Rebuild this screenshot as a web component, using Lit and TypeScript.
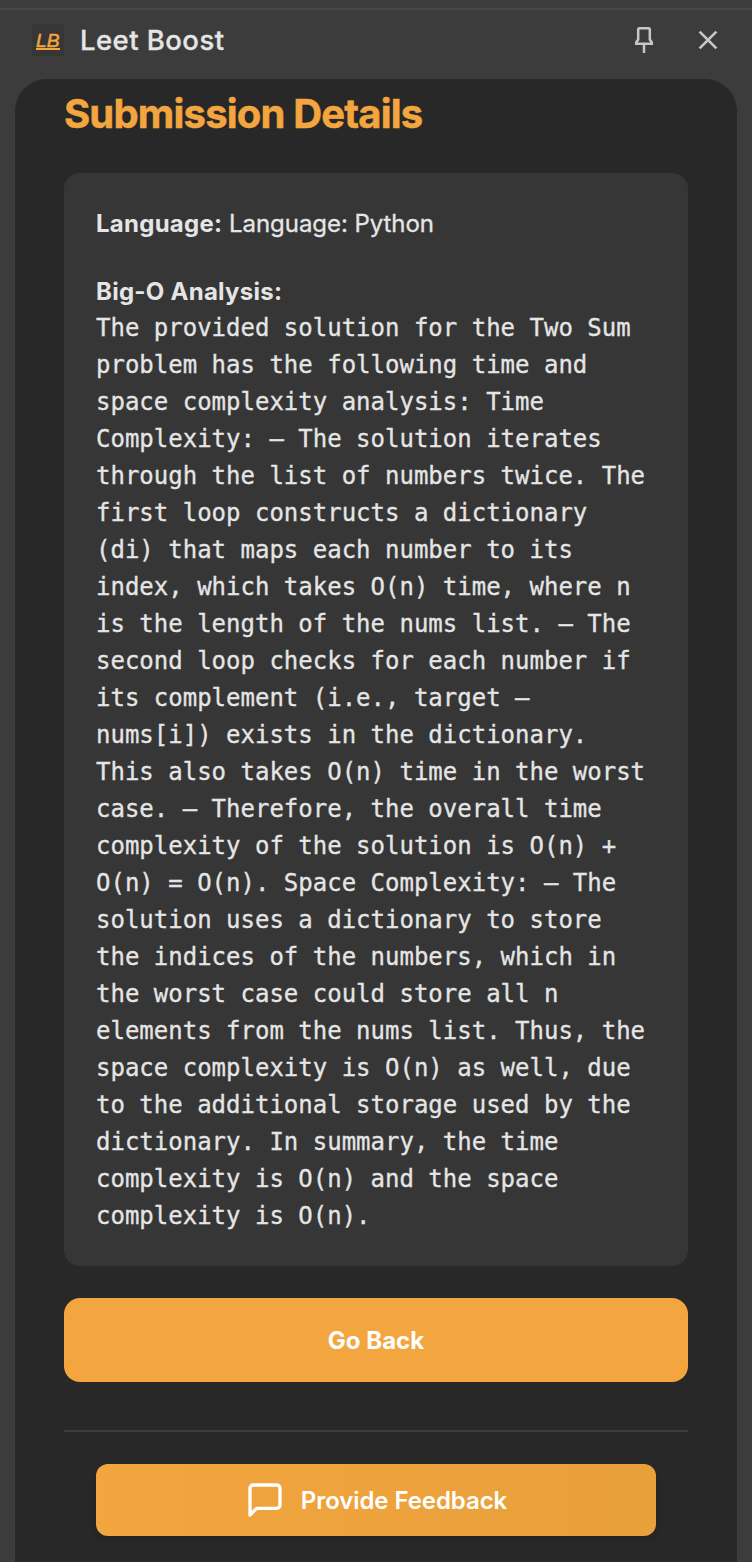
import { LitElement, html, css } from "lit";
import { customElement } from "lit/decorators.js";

const ANALYSIS = [
  "The provided solution for the Two Sum",
  "problem has the following time and",
  "space complexity analysis: Time",
  "Complexity: – The solution iterates",
  "through the list of numbers twice. The",
  "first loop constructs a dictionary",
  "(di) that maps each number to its",
  "index, which takes O(n) time, where n",
  "is the length of the nums list. – The",
  "second loop checks for each number if",
  "its complement (i.e., target –",
  "nums[i]) exists in the dictionary.",
  "This also takes O(n) time in the worst",
  "case. – Therefore, the overall time",
  "complexity of the solution is O(n) +",
  "O(n) = O(n). Space Complexity: – The",
  "solution uses a dictionary to store",
  "the indices of the numbers, which in",
  "the worst case could store all n",
  "elements from the nums list. Thus, the",
  "space complexity is O(n) as well, due",
  "to the additional storage used by the",
  "dictionary. In summary, the time",
  "complexity is O(n) and the space",
  "complexity is O(n).",
].join("\n");

@customElement("app-root")
export class AppRoot extends LitElement {
  static styles = css`
    :host {
      display: flex;
      flex-direction: column;
      box-sizing: border-box;
      height: 1562px;
      overflow: hidden;
      padding-top: 8px;
      background: #3c3c3c;
      color: #e5e5e5;
      font-family: Inter, "Liberation Sans", sans-serif;
    }
    * { box-sizing: border-box; }
    .bar {
      display: flex;
      align-items: center;
      flex: none;
      height: 71px;
      padding: 0 32px 9px;
      border-top: 2px solid #484848;
    }
    .logo {
      display: block;
      width: 32px;
      height: 32px;
      margin-right: 16px;
    }
    .name {
      flex: 1;
      font-size: 27.5px;
      font-weight: 500;
      line-height: 36px;
      letter-spacing: 0.45px;
      white-space: nowrap;
      -webkit-text-stroke: 0.3px #e5e5e5;
    }
    .icon { display: block; width: 32px; height: 32px; }
    .pin { margin-right: 32px; }
    .close { margin-right: -4px; }
    .panel {
      flex: 1;
      margin: 0 15px;
      padding: 11px 49px 0;
      border-radius: 32px 32px 0 0;
      background: #282828;
    }
    .title {
      margin: 0;
      height: 48px;
      color: #f3a53f;
      font-size: 40px;
      font-weight: 700;
      line-height: 48px;
      letter-spacing: -0.82px;
      white-space: nowrap;
      -webkit-text-stroke: 0.5px #f3a53f;
    }
    .card {
      margin-top: 35px;
      padding: 33px 32px 31px;
      border-radius: 16px;
      background: #363636;
      font-size: 24px;
      line-height: 36px;
      white-space: nowrap;
    }
    .language { margin: 0 0 32px; }
    .label { font-weight: 700; letter-spacing: 0.26px; }
    .value { letter-spacing: -0.06px; -webkit-text-stroke: 0.3px #e5e5e5; }
    .analysis {
      margin: 0;
      font-family: "DejaVu Sans Mono", monospace;
      font-size: 24px;
      line-height: 37px;
      white-space: pre;
      -webkit-text-stroke: 0.3px #e5e5e5;
    }
    .back, .feedback {
      display: flex;
      align-items: center;
      justify-content: center;
      width: 100%;
      padding: 0;
      border: 0;
      color: #fff;
      font-family: inherit;
      font-size: 24px;
      font-weight: 600;
      white-space: nowrap;
    }
    .back {
      height: 84px;
      margin-top: 32px;
      border-radius: 16px;
      background: #f3a53f;
      font-weight: 700;
    }
    .footer {
      margin-top: 48px;
      padding: 32px 32px 0;
      border-top: 2px solid #3c3c3c;
    }
    .feedback {
      gap: 16px;
      height: 72px;
      border-radius: 12px;
      background: linear-gradient(90deg, #f3a53f, #e8a03a);
      box-shadow: 0 4px 8px rgba(0, 0, 0, 0.12);
      letter-spacing: -0.08px;
    }
    .bubble { width: 40px; height: 40px; }
  `;

  render() {
    return html`
      <header class="bar">
        <svg class="logo" viewBox="0 0 32 32">
          <rect width="32" height="32" fill="#363636" />
          <text x="4" y="23" fill="#f3a53f" stroke="#f3a53f" stroke-width="0.5" font-family="Liberation Sans" font-size="18.5" font-style="italic" textLength="23.500" lengthAdjust="spacingAndGlyphs">LB</text>
          <path d="M4 25h24" stroke="#f3a53f" stroke-width="2" />
        </svg>
        <span class="name">Leet Boost</span>
        <svg class="icon pin" viewBox="0 0 32 32" fill="none" stroke="#c7c7c7" stroke-width="2.500">
          <path d="M11.500 4.300h9a1.300 1.300 0 0 1 1.300 1.300V15.500l2 3v1.200H8.200v-1.200l2-3V5.600A1.300 1.300 0 0 1 11.500 4.300zM16 20v9" />
        </svg>
        <svg class="icon close" viewBox="0 0 32 32" fill="none" stroke="#c7c7c7" stroke-width="2.700">
          <path d="M7.600 7.600l16.800 16.800M24.400 7.600l-16.800 16.800" />
        </svg>
      </header>
      <main class="panel">
        <h1 class="title">Submission Details</h1>
        <section class="card">
          <p class="language"><span class="label">Language:</span> <span class="value">Language: Python</span></p>
          <div class="label">Big-O Analysis:</div>
          <pre class="analysis">${ANALYSIS}</pre>
        </section>
        <button class="back">Go Back</button>
        <footer class="footer">
          <button class="feedback">
            <svg class="bubble" viewBox="0 0 24 24" fill="none" stroke="#fff" stroke-width="2" stroke-linecap="round" stroke-linejoin="round">
              <path d="M21 15a2 2 0 0 1-2 2H7l-4 4V5a2 2 0 0 1 2-2h14a2 2 0 0 1 2 2z" />
            </svg>
            <span class="feedback-text">Provide Feedback</span>
          </button>
        </footer>
      </main>
    `;
  }
}
